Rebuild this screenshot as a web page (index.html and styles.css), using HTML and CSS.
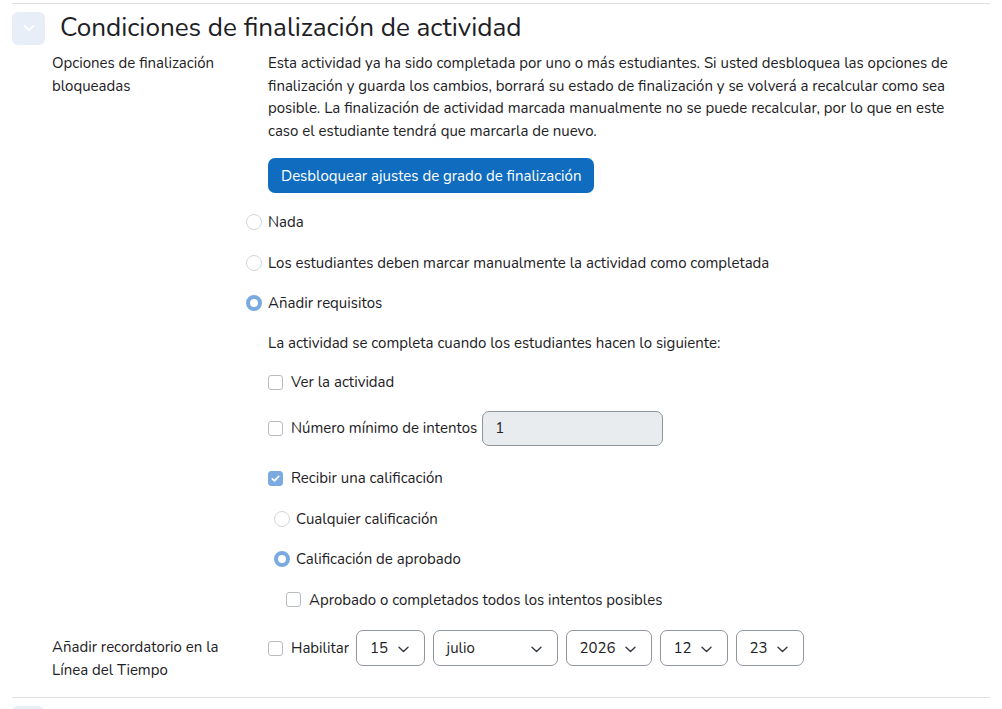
FILE: index.html
```html
<!DOCTYPE html>
<html lang="es">
<head>
<meta charset="utf-8">
<link rel="stylesheet" href="styles.css">
</head>
<body>
<div class="section">
  <div class="sec-head">
    <span class="collapse-btn"><svg width="14" height="14" viewBox="0 0 14 14"><path d="M2.5 4.8 L7 9.2 L11.5 4.8" fill="none" stroke="#fff" stroke-width="1.8" stroke-linecap="round" stroke-linejoin="round"/></svg></span>
    <h3 class="sec-title">Condiciones de finalización de actividad</h3>
  </div>

  <div class="frow first">
    <div class="flabel">Opciones de finalización<br>bloqueadas</div>
    <div class="fcontent">
      <p class="notice">Esta actividad ya ha sido completada por uno o más estudiantes. Si usted desbloquea las opciones de<br>finalización y guarda los cambios, borrará su estado de finalización y se volverá a recalcular como sea<br>posible. La finalización de actividad marcada manualmente no se puede recalcular, por lo que en este<br>caso el estudiante tendrá que marcarla de nuevo.</p>
      <button class="btn-primary">Desbloquear ajustes de grado de finalización</button>

      <div class="opt radio-row"><span class="radio"></span><span>Nada</span></div>
      <div class="opt radio-row"><span class="radio"></span><span>Los estudiantes deben marcar manualmente la actividad como completada</span></div>
      <div class="opt radio-row"><span class="radio on"></span><span>Añadir requisitos</span></div>
      <div class="opt intro">La actividad se completa cuando los estudiantes hacen lo siguiente:</div>
      <div class="opt short"><span class="check"></span><span>Ver la actividad</span></div>
      <div class="opt with-input"><span class="check"></span><span>Número mínimo de intentos</span><span class="num-input">1</span></div>
      <div class="opt"><span class="check on"><svg width="11" height="11" viewBox="0 0 11 11"><path d="M2.3 5.8 L4.5 7.9 L8.7 3.4" fill="none" stroke="#fff" stroke-width="1.7" stroke-linecap="round" stroke-linejoin="round"/></svg></span><span>Recibir una calificación</span></div>
      <div class="opt radio-row sub"><span class="radio"></span><span>Cualquier calificación</span></div>
      <div class="opt radio-row sub"><span class="radio on"></span><span>Calificación de aprobado</span></div>
      <div class="opt subsub"><span class="check"></span><span>Aprobado o completados todos los intentos posibles</span></div>
    </div>
  </div>

  <div class="frow reminder">
    <div class="flabel">Añadir recordatorio en la<br>Línea del Tiempo</div>
    <div class="fcontent inline">
      <span class="check"></span><span class="enable">Habilitar</span>
      <span class="select w-day">15<svg class="chev" width="11" height="7" viewBox="0 0 11 7"><path d="M1 1.2 L5.5 5.5 L10 1.2" fill="none" stroke="#343a40" stroke-width="1.4" stroke-linecap="round" stroke-linejoin="round"/></svg></span>
      <span class="select w-month">julio<svg class="chev" width="11" height="7" viewBox="0 0 11 7"><path d="M1 1.2 L5.5 5.5 L10 1.2" fill="none" stroke="#343a40" stroke-width="1.4" stroke-linecap="round" stroke-linejoin="round"/></svg></span>
      <span class="select w-year">2026<svg class="chev" width="11" height="7" viewBox="0 0 11 7"><path d="M1 1.2 L5.5 5.5 L10 1.2" fill="none" stroke="#343a40" stroke-width="1.4" stroke-linecap="round" stroke-linejoin="round"/></svg></span>
      <span class="select w-hour">12<svg class="chev" width="11" height="7" viewBox="0 0 11 7"><path d="M1 1.2 L5.5 5.5 L10 1.2" fill="none" stroke="#343a40" stroke-width="1.4" stroke-linecap="round" stroke-linejoin="round"/></svg></span>
      <span class="select w-min">23<svg class="chev" width="11" height="7" viewBox="0 0 11 7"><path d="M1 1.2 L5.5 5.5 L10 1.2" fill="none" stroke="#343a40" stroke-width="1.4" stroke-linecap="round" stroke-linejoin="round"/></svg></span>
    </div>
  </div>
</div>
<div class="next-section"><span class="collapse-btn small"></span></div>
</body>
</html>
```

FILE: styles.css
```css
* { box-sizing: border-box; }
html, body { margin: 0; padding: 0; background: #fff; }
body {
  font-family: "Nunito", "Lato", "Noto Sans", sans-serif;
  font-size: 15px;
  line-height: 22.5px;
  color: #1d2125;
  width: 1002px;
  height: 709px;
  overflow: hidden;
}
.section {
  margin: 3px 12px 0 12px;
  width: 978px;
  border-top: 1px solid #dee2e6;
  border-bottom: 1px solid #dee2e6;
  height: 695px;
}
.sec-head {
  display: flex;
  align-items: center;
  padding-top: 7px;
  height: 41px;
}
.collapse-btn {
  width: 33px;
  height: 33px;
  border-radius: 6px;
  background: #e7eef8;
  display: flex;
  align-items: center;
  justify-content: center;
  flex: none;
}
.sec-title {
  margin: 0 0 0 15px;
  font-weight: 400;
  font-size: 26.1px;
  line-height: 30px;
  color: #1d2125;
}
.frow { display: flex; }
.frow.first { margin-top: 7px; }
.flabel {
  width: 256px;
  padding-left: 40px;
  flex: none;
}
.fcontent { flex: 1; }
.notice { margin: 0 0 16px 0; white-space: nowrap; }
.btn-primary {
  display: block;
  font: inherit;
  color: #fff;
  background: #0f6cbf;
  border: none;
  border-radius: 7px;
  height: 35px;
  padding: 1px 13px 0 13px;
  margin-bottom: 9px;
}
.opt {
  display: flex;
  align-items: center;
  height: 40.5px;
  white-space: nowrap;
}
.opt.intro { height: 40px; }
.opt.short { height: 37.5px; }
.opt.with-input { height: 57px; padding-bottom: 2px; }
.radio-row { margin-left: -22px; }
.radio-row.sub { margin-left: 6px; }
.opt.subsub { margin-left: 18px; }
.radio {
  width: 16px;
  height: 16px;
  border-radius: 50%;
  border: 1px solid #d3d6da;
  background: #fff;
  margin-right: 6px;
  flex: none;
}
.radio.on {
  border: 4.5px solid #7aaadf;
  background: #fff;
}
.check {
  width: 15px;
  height: 15px;
  border-radius: 3px;
  border: 1px solid #b6bcc2;
  background: #fff;
  margin-right: 8px;
  flex: none;
  display: flex;
  align-items: center;
  justify-content: center;
}
.check.on { background: #7aaadf; border-color: #7aaadf; }
.num-input {
  margin-left: 5px;
  width: 181px;
  height: 35px;
  border: 1px solid #8f959e;
  border-radius: 7px;
  background: #e9ecef;
  display: flex;
  align-items: center;
  padding-left: 12px;
  flex: none;
}
.frow.reminder { margin-top: 10px; }
.reminder .flabel { padding-top: 6px; }
.fcontent.inline {
  display: flex;
  align-items: center;
  height: 36px;
}
.enable { margin-right: 7px; }
.select {
  flex: none;
  height: 36px;
  border: 1px solid #8f959e;
  border-radius: 7px;
  display: flex;
  align-items: center;
  padding-left: 13px;
  margin-right: 8px;
  position: relative;
}
.chev {
  position: absolute;
  right: 15px;
  top: 15px;
}
.w-day { width: 68.5px; }
.w-month { width: 125px; }
.w-year { width: 86px; }
.w-hour { width: 68px; }
.w-min { width: 68px; }
.next-section {
  margin: 8px 0 0 12px;
}
.collapse-btn.small { width: 32px; height: 32px; }
```
